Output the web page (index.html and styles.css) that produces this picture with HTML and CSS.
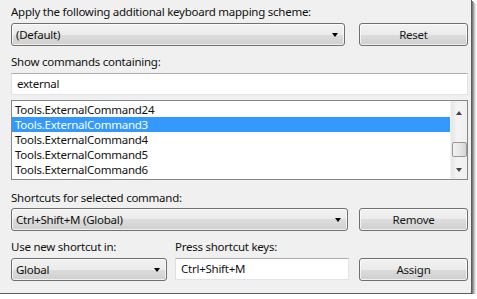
FILE: index.html
```html
<!DOCTYPE html>
<html lang="en">
<head>
  <meta charset="UTF-8" />
  <title>Keyboard</title>
  <link rel="stylesheet" href="styles.css">
</head>
<body>
  <div class="window">
    <div class="label">Apply the following additional keyboard mapping scheme:</div>
    <div class="row row-top">
      <div class="combo combo-scheme">(Default)<span class="arrow"></span></div>
      <button class="btn">Reset</button>
    </div>

    <div class="label label-gap">Show commands containing:</div>
    <div class="textbox textbox-wide">external</div>

    <div class="listbox">
      <ul class="items">
        <li>Tools.ExternalCommand24</li>
        <li class="selected">Tools.ExternalCommand3</li>
        <li>Tools.ExternalCommand4</li>
        <li>Tools.ExternalCommand5</li>
        <li>Tools.ExternalCommand6</li>
      </ul>
      <div class="scrollbar">
        <span class="scroll-up"></span>
        <span class="thumb"></span>
        <span class="scroll-down"></span>
      </div>
    </div>

    <div class="label label-shortcuts">Shortcuts for selected command:</div>
    <div class="row row-mid">
      <div class="combo combo-shortcuts">Ctrl+Shift+M (Global)<span class="arrow"></span></div>
      <button class="btn">Remove</button>
    </div>

    <div class="row row-labels">
      <div class="label col-scope">Use new shortcut in:</div>
      <div class="label">Press shortcut keys:</div>
    </div>
    <div class="row row-bottom">
      <div class="combo combo-scope">Global<span class="arrow"></span></div>
      <div class="textbox textbox-keys">Ctrl+Shift+M</div>
      <button class="btn">Assign</button>
    </div>
  </div>
</body>
</html>
```

FILE: styles.css
```css
* {
  margin: 0;
  padding: 0;
  box-sizing: border-box;
}
body {
  background: #ffffff;
  font-family: "Noto Sans", "Open Sans", sans-serif;
  font-size: 11.5px;
  letter-spacing: -0.25px;
  color: #111;
}
.window {
  width: 472px;
  height: 294px;
  background: #f0f0f0;
  padding: 4px 0 0 11px;
  border-right: 1px solid #5c5c5c;
  border-bottom: 1px solid #5c5c5c;
  box-shadow: 1px 1px 0 #7c7c7c, 2px 2px 0 #a2a2a2, 3px 3px 0 #c8c8c8, 4px 4px 0 #e4e4e4;
}
.label {
  height: 15px;
  line-height: 15px;
  white-space: nowrap;
}
.label-gap {
  margin-top: 8px;
}
.label-shortcuts {
  margin-top: 10px;
}
.row {
  display: flex;
  align-items: flex-start;
}
.row-top {
  margin-top: 4px;
  gap: 14px;
}
.row-mid {
  margin-top: 3px;
  gap: 11px;
}
.row-labels {
  margin-top: 8px;
}
.col-scope {
  width: 164px;
}
.row-bottom {
  margin-top: 4px;
  gap: 8px;
}
.row-bottom .btn {
  margin-left: 2px;
}

.combo {
  position: relative;
  height: 23px;
  line-height: 21px;
  padding-left: 4px;
  border: 1px solid #707070;
  border-radius: 3px;
  background: linear-gradient(#f2f2f2, #ebebeb 50%, #dddddd 50%, #cfcfcf);
  box-shadow: inset 0 0 0 1px rgba(255, 255, 255, 0.7);
}
.combo-scheme { width: 334px; }
.combo-shortcuts { width: 337px; }
.combo-scope { width: 156px; }
.arrow {
  position: absolute;
  right: 6px;
  top: 9px;
  border-left: 3.5px solid transparent;
  border-right: 3.5px solid transparent;
  border-top: 4px solid #000;
}

.btn {
  width: 109px;
  height: 23px;
  font: inherit;
  letter-spacing: inherit;
  color: #1a1a1a;
  border: 1px solid #707070;
  border-radius: 3px;
  background: linear-gradient(#f2f2f2, #ebebeb 50%, #dddddd 50%, #cfcfcf);
  box-shadow: inset 0 0 0 1px rgba(255, 255, 255, 0.7);
}

.textbox {
  height: 22px;
  line-height: 20px;
  padding-left: 5px;
  background: #fff;
  border: 1px solid #e2e3ea;
  border-top-color: #abadb3;
  border-left-color: #dbdfe6;
}
.textbox-wide {
  margin-top: 4px;
  width: 457px;
}
.textbox-keys {
  width: 174px;
}

.listbox {
  margin-top: 5px;
  width: 457px;
  height: 80px;
  display: flex;
  background: #fff;
  border: 1px solid #828790;
}
.items {
  flex: 1;
  list-style: none;
  padding-top: 1px;
}
.items li {
  height: 15px;
  line-height: 15px;
  padding-left: 3px;
}
.items li.selected {
  background: #3399ff;
  color: #fff;
}
.scrollbar {
  position: relative;
  width: 17px;
  background: linear-gradient(to right, #e6e6e6, #f4f4f4 40%, #f0f0f0);
  border-left: 1px solid #f4f4f4;
}
.scroll-up, .scroll-down {
  position: absolute;
  left: 5px;
  border-left: 3.5px solid transparent;
  border-right: 3.5px solid transparent;
}
.scroll-up {
  top: 10px;
  border-bottom: 4px solid #444;
}
.scroll-down {
  bottom: 7px;
  border-top: 4px solid #444;
}
.thumb {
  position: absolute;
  left: 1px;
  top: 41px;
  width: 15px;
  height: 15px;
  border: 1px solid #979797;
  border-radius: 2px;
  background: linear-gradient(to right, #f2f2f2, #e6e6e6 50%, #d6d6d6);
}
```
